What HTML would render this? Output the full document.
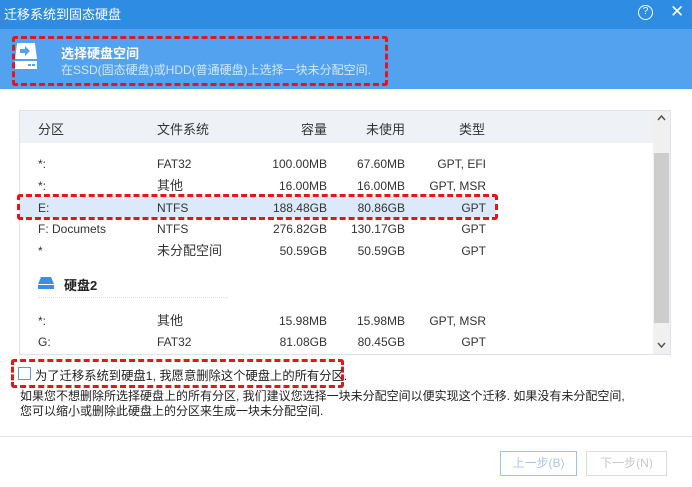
<!DOCTYPE html>
<html><head><meta charset="utf-8"><style>
*{margin:0;padding:0;box-sizing:border-box}
body{width:692px;height:487px;position:relative;overflow:hidden;background:#fff;font-family:"Liberation Sans","Noto Sans CJK SC",sans-serif;font-size:12px;color:#333}
.a{position:absolute;white-space:nowrap}
.r{text-align:right}
.dash{position:absolute;border:3px dashed #e8141c;border-radius:3px}
</style></head><body>
<div class="a" style="left:0;top:0;width:692px;height:29px;background:#2e8ce3"></div>
<div class="a" style="left:4px;top:4px;color:#fff;font-size:13px">迁移系统到固态硬盘</div>
<div class="a" style="left:638px;top:5px;width:15px;height:15px;border:1.5px solid #fff;border-radius:50%;color:#fff;font-size:10px;text-align:center;line-height:12px">?</div>
<div class="a" style="left:670px;top:2px;color:#fff;font-size:17px">✕</div>
<div class="a" style="left:0;top:29px;width:692px;height:60px;background:#52a2ef"></div>
<svg class="a" style="left:15px;top:43px" width="22" height="26" viewBox="0 0 22 26">
<path d="M2 1Q2 0 3 0H19Q20 0 20 1L22 16H0Z" fill="#fff"/><path d="M5 6H10V3L15 8L10 13V10H5Z" fill="#52a2ef"/>
<rect x="0" y="18" width="22" height="8" fill="#fff"/><rect x="13" y="21" width="3" height="2" fill="#52a2ef"/><rect x="17" y="21" width="3" height="2" fill="#52a2ef"/></svg>
<div class="a" style="left:61px;top:43px;color:#fff;font-weight:bold;font-size:13px">选择硬盘空间</div>
<div class="a" style="left:61px;top:61px;color:#d3e7fb;font-size:12px">在SSD(固态硬盘)或HDD(普通硬盘)上选择一块未分配空间.</div>
<div class="dash" style="left:12px;top:36px;width:376px;height:50px"></div>

<div class="a" style="left:19px;top:110px;width:652px;height:245px;border:1px solid #dde3ea"></div>
<div class="a" style="left:20px;top:111px;width:633px;height:32px;background:#eef2f7"></div>
<div class="a" style="left:653px;top:111px;width:17px;height:243px;background:#f0f0f0"></div>
<div class="a" style="left:654px;top:153px;width:15px;height:170px;background:#cdcdcd"></div>
<svg class="a" style="left:657px;top:115px" width="9" height="6"><path d="M1 5L4.5 1L8 5" stroke="#555" stroke-width="1.5" fill="none"/></svg>
<svg class="a" style="left:657px;top:342px" width="9" height="6"><path d="M1 1L4.5 5L8 1" stroke="#555" stroke-width="1.5" fill="none"/></svg>
<div class="a" style="left:38px;top:119px;font-size:13px">分区</div>
<div class="a" style="left:157px;top:119px;font-size:13px">文件系统</div>
<div class="a r" style="left:250px;width:77px;top:119px;font-size:13px">容量</div>
<div class="a r" style="left:330px;width:75px;top:119px;font-size:13px">未使用</div>
<div class="a r" style="left:410px;width:75px;top:119px;font-size:13px">类型</div>

<div class="a" style="left:20px;top:197px;width:476px;height:21px;background:#dce9fa"></div>
<div class="dash" style="left:17px;top:194px;width:481px;height:26px"></div>

<div class="a" style="left:38px;top:157px">*:</div><div class="a" style="left:157px;top:157px">FAT32</div><div class="a r" style="left:250px;width:77px;top:157px">100.00MB</div><div class="a r" style="left:330px;width:75px;top:157px">67.60MB</div><div class="a r" style="left:400px;width:86px;top:157px">GPT, EFI</div>
<div class="a" style="left:38px;top:179px">*:</div><div class="a" style="left:157px;top:175px;font-size:13px">其他</div><div class="a r" style="left:250px;width:77px;top:179px">16.00MB</div><div class="a r" style="left:330px;width:75px;top:179px">16.00MB</div><div class="a r" style="left:400px;width:86px;top:179px">GPT, MSR</div>
<div class="a" style="left:38px;top:201px">E:</div><div class="a" style="left:157px;top:201px">NTFS</div><div class="a r" style="left:250px;width:77px;top:201px">188.48GB</div><div class="a r" style="left:330px;width:75px;top:201px">80.86GB</div><div class="a r" style="left:400px;width:86px;top:201px">GPT</div>
<div class="a" style="left:38px;top:222px">F: Documets</div><div class="a" style="left:157px;top:222px">NTFS</div><div class="a r" style="left:250px;width:77px;top:222px">276.82GB</div><div class="a r" style="left:330px;width:75px;top:222px">130.17GB</div><div class="a r" style="left:400px;width:86px;top:222px">GPT</div>
<div class="a" style="left:38px;top:244px">*</div><div class="a" style="left:157px;top:240px;font-size:13px">未分配空间</div><div class="a r" style="left:250px;width:77px;top:244px">50.59GB</div><div class="a r" style="left:330px;width:75px;top:244px">50.59GB</div><div class="a r" style="left:400px;width:86px;top:244px">GPT</div>

<svg class="a" style="left:38px;top:277px" width="16" height="12"><path d="M3 0H13L16 7H0Z" fill="#3c8fe0"/><rect x="0" y="8" width="16" height="4" fill="#3c8fe0"/></svg>
<div class="a" style="left:64px;top:275px;font-weight:bold;font-size:13px;color:#222">硬盘2</div>
<div class="a" style="left:38px;top:297px;width:190px;border-top:1px dotted #ddd"></div>

<div class="a" style="left:38px;top:314px">*:</div><div class="a" style="left:157px;top:310px;font-size:13px">其他</div><div class="a r" style="left:250px;width:77px;top:314px">15.98MB</div><div class="a r" style="left:330px;width:75px;top:314px">15.98MB</div><div class="a r" style="left:400px;width:86px;top:314px">GPT, MSR</div>
<div class="a" style="left:38px;top:335px">G:</div><div class="a" style="left:157px;top:335px">FAT32</div><div class="a r" style="left:250px;width:77px;top:335px">81.08GB</div><div class="a r" style="left:330px;width:75px;top:335px">80.45GB</div><div class="a r" style="left:400px;width:86px;top:335px">GPT</div>

<div class="dash" style="left:11px;top:359px;width:333px;height:29px"></div>
<div class="a" style="left:18px;top:367px;width:13px;height:13px;border:1px solid #5a9be0;background:#fff"></div>
<div class="a" style="left:35px;top:366px;color:#222;font-size:12.3px">为了迁移系统到硬盘1, 我愿意删除这个硬盘上的所有分区.</div>
<div class="a" style="left:20px;top:387px;color:#222">如果您不想删除所选择硬盘上的所有分区, 我们建议您选择一块未分配空间以便实现这个迁移. 如果没有未分配空间,</div>
<div class="a" style="left:20px;top:402px;color:#222">您可以缩小或删除此硬盘上的分区来生成一块未分配空间.</div>
<div class="a" style="left:0;top:436px;width:692px;height:1px;background:#e6e6e6"></div>
<div class="a" style="left:500px;top:451px;width:77px;height:25px;border:1px solid #9cc3ef;color:#a9c6e8;text-align:center;line-height:23px">上一步(B)</div>
<div class="a" style="left:586px;top:451px;width:81px;height:25px;border:1px solid #ddd;color:#c8c8c8;text-align:center;line-height:23px">下一步(N)</div>
</body></html>
